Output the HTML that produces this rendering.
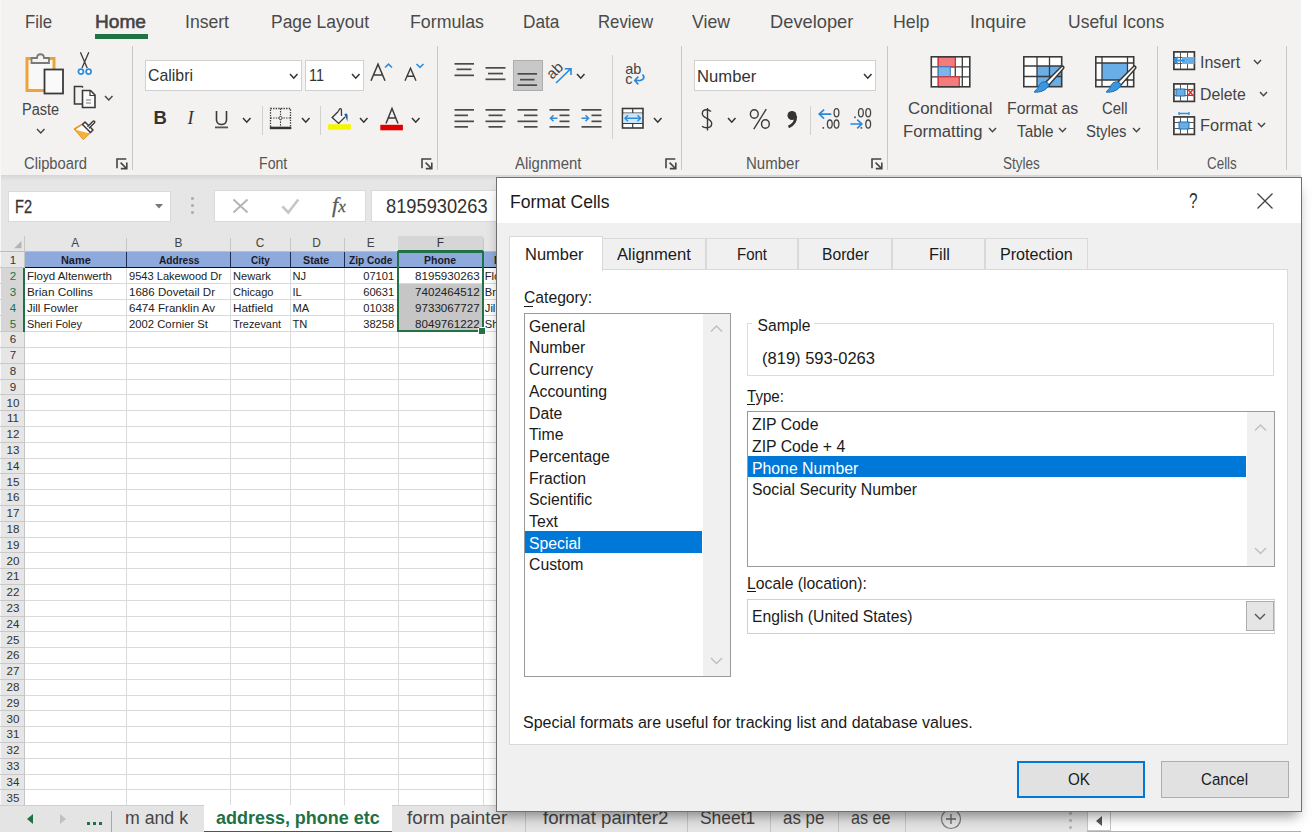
<!DOCTYPE html>
<html><head><meta charset="utf-8"><style>
html,body{margin:0;padding:0;width:1315px;height:834px;overflow:hidden;position:relative;font-family:"Liberation Sans", sans-serif;background:#fff}
svg{display:block}
</style></head><body>
<div style="position:absolute;left:0px;top:0px;width:1301px;height:175px;background:#f3f2f1"></div>
<div style="position:absolute;left:0px;top:175px;width:1301px;height:6px;background:linear-gradient(#d6d6d6,#e6e6e6)"></div>
<div style="position:absolute;left:0px;top:181px;width:1301px;height:71px;background:#e6e6e6"></div>
<div style="position:absolute;left:0px;top:0px;width:1px;height:834px;background:#f7f7f7"></div>
<div id="t0" style="position:absolute;white-space:nowrap;line-height:1;font-size:19.13px;top:11.81px;color:#4a4a4a;font-weight:normal;left:25.00px;transform-origin:0 0;transform:scaleX(0.8767);">File</div>
<div id="t1" style="position:absolute;white-space:nowrap;line-height:1;font-size:19.13px;top:11.81px;color:#444;font-weight:normal;left:95.00px;transform-origin:0 0;-webkit-text-stroke:0.6px #444;">Home</div>
<div id="t2" style="position:absolute;white-space:nowrap;line-height:1;font-size:19.13px;top:11.81px;color:#4a4a4a;font-weight:normal;left:185.00px;transform-origin:0 0;transform:scaleX(0.9206);">Insert</div>
<div id="t3" style="position:absolute;white-space:nowrap;line-height:1;font-size:19.13px;top:11.81px;color:#4a4a4a;font-weight:normal;left:271.00px;transform-origin:0 0;transform:scaleX(0.9131);">Page Layout</div>
<div id="t4" style="position:absolute;white-space:nowrap;line-height:1;font-size:19.13px;top:11.81px;color:#4a4a4a;font-weight:normal;left:409.50px;transform-origin:0 0;transform:scaleX(0.9292);">Formulas</div>
<div id="t5" style="position:absolute;white-space:nowrap;line-height:1;font-size:19.13px;top:11.81px;color:#4a4a4a;font-weight:normal;left:522.60px;transform-origin:0 0;transform:scaleX(0.9015);">Data</div>
<div id="t6" style="position:absolute;white-space:nowrap;line-height:1;font-size:19.13px;top:11.81px;color:#4a4a4a;font-weight:normal;left:598.00px;transform-origin:0 0;transform:scaleX(0.8778);">Review</div>
<div id="t7" style="position:absolute;white-space:nowrap;line-height:1;font-size:19.13px;top:11.81px;color:#4a4a4a;font-weight:normal;left:692.00px;transform-origin:0 0;transform:scaleX(0.9251);">View</div>
<div id="t8" style="position:absolute;white-space:nowrap;line-height:1;font-size:19.13px;top:11.81px;color:#4a4a4a;font-weight:normal;left:769.60px;transform-origin:0 0;transform:scaleX(0.9574);">Developer</div>
<div id="t9" style="position:absolute;white-space:nowrap;line-height:1;font-size:19.13px;top:11.81px;color:#4a4a4a;font-weight:normal;left:892.70px;transform-origin:0 0;transform:scaleX(0.9285);">Help</div>
<div id="t10" style="position:absolute;white-space:nowrap;line-height:1;font-size:19.13px;top:11.81px;color:#4a4a4a;font-weight:normal;left:969.60px;transform-origin:0 0;transform:scaleX(0.9617);">Inquire</div>
<div id="t11" style="position:absolute;white-space:nowrap;line-height:1;font-size:19.13px;top:11.81px;color:#4a4a4a;font-weight:normal;left:1068.40px;transform-origin:0 0;transform:scaleX(0.9158);">Useful Icons</div>
<div style="position:absolute;left:95px;top:34.3px;width:53px;height:4.6px;background:#217346"></div>
<div style="position:absolute;left:132px;top:46px;width:1px;height:124px;background:#c8c8c8"></div>
<div style="position:absolute;left:437px;top:46px;width:1px;height:124px;background:#c8c8c8"></div>
<div style="position:absolute;left:681px;top:46px;width:1px;height:124px;background:#c8c8c8"></div>
<div style="position:absolute;left:887px;top:46px;width:1px;height:124px;background:#c8c8c8"></div>
<div style="position:absolute;left:1157px;top:46px;width:1px;height:124px;background:#c8c8c8"></div>
<div style="position:absolute;left:1286px;top:46px;width:1px;height:124px;background:#c8c8c8"></div>
<div style="position:absolute;left:262px;top:106px;width:1px;height:29px;background:#d0d0d0"></div>
<div style="position:absolute;left:320px;top:106px;width:1px;height:29px;background:#d0d0d0"></div>
<div style="position:absolute;left:612px;top:55px;width:1px;height:84px;background:#d0d0d0"></div>
<div style="position:absolute;left:810px;top:106px;width:1px;height:29px;background:#d0d0d0"></div>
<div id="t12" style="position:absolute;white-space:nowrap;line-height:1;font-size:15.65px;top:156.25px;color:#555;font-weight:normal;left:23.50px;transform-origin:0 0;transform:scaleX(0.9410);">Clipboard</div>
<div id="t13" style="position:absolute;white-space:nowrap;line-height:1;font-size:15.65px;top:156.25px;color:#555;font-weight:normal;left:259.20px;transform-origin:0 0;transform:scaleX(0.9042);">Font</div>
<div id="t14" style="position:absolute;white-space:nowrap;line-height:1;font-size:15.65px;top:156.25px;color:#555;font-weight:normal;left:514.90px;transform-origin:0 0;transform:scaleX(0.9545);">Alignment</div>
<div id="t15" style="position:absolute;white-space:nowrap;line-height:1;font-size:15.65px;top:156.25px;color:#555;font-weight:normal;left:745.50px;transform-origin:0 0;transform:scaleX(0.9597);">Number</div>
<div id="t16" style="position:absolute;white-space:nowrap;line-height:1;font-size:15.65px;top:156.25px;color:#555;font-weight:normal;left:1002.60px;transform-origin:0 0;transform:scaleX(0.8663);">Styles</div>
<div id="t17" style="position:absolute;white-space:nowrap;line-height:1;font-size:15.65px;top:156.25px;color:#555;font-weight:normal;left:1206.50px;transform-origin:0 0;transform:scaleX(0.8572);">Cells</div>
<div style="position:absolute;left:8px;top:191px;width:163px;height:31px;background:#fff;box-shadow:0 0 0 1px #dadada inset"></div>
<div id="t18" style="position:absolute;white-space:nowrap;line-height:1;font-size:18.84px;top:198.05px;color:#333;font-weight:normal;left:15.40px;transform-origin:0 0;transform:scaleX(0.7733);-webkit-text-stroke:0.3px #333;">F2</div>
<svg style="position:absolute;left:154.5px;top:203.5px;overflow:visible;" width="8" height="4.5" viewBox="0 0 8 4.5"><polygon points="0,0 8,0 4,4.5" fill="#777"/></svg>
<div style="position:absolute;left:191px;top:197px;width:2.5px;height:2.5px;background:#b0b0b0;border-radius:50%"></div>
<div style="position:absolute;left:191px;top:204px;width:2.5px;height:2.5px;background:#b0b0b0;border-radius:50%"></div>
<div style="position:absolute;left:191px;top:211px;width:2.5px;height:2.5px;background:#b0b0b0;border-radius:50%"></div>
<div style="position:absolute;left:214px;top:190px;width:152px;height:32px;background:#fff;box-shadow:0 0 0 1px #dadada inset"></div>
<div style="position:absolute;left:371px;top:190px;width:930px;height:32px;background:#fff;box-shadow:0 0 0 1px #dadada inset"></div>
<div id="t19" style="position:absolute;white-space:nowrap;line-height:1;font-size:19.42px;top:196.56px;color:#333;font-weight:normal;left:386.20px;transform-origin:0 0;transform:scaleX(0.9413);">8195930263</div>
<svg style="position:absolute;left:231.5px;top:197.5px;overflow:visible;" width="17" height="16" viewBox="0 0 17 16"><path d="M1.5,1.5 L15.5,14.5 M15.5,1.5 L1.5,14.5" stroke="#b4b4b4" stroke-width="1.9" fill="none"/></svg>
<svg style="position:absolute;left:280px;top:197px;overflow:visible;" width="20" height="17" viewBox="0 0 20 17"><path d="M2.3,9.3 L8.3,15.5 L18.3,2.5" stroke="#c6c6c6" stroke-width="2.6" fill="none"/></svg>
<div style="position:absolute;left:332px;top:194px;font-family:'Liberation Serif',serif;font-style:italic;font-size:22px;color:#5a5a5a;line-height:1;-webkit-text-stroke:0.3px #5a5a5a">f<span style="font-size:17px">x</span></div>
<div style="position:absolute;left:24px;top:251px;width:1277px;height:554px;background:#fff"></div>
<div style="position:absolute;left:1px;top:251px;width:23px;height:554px;background:#e6e6e6"></div>
<div style="position:absolute;left:126px;top:238px;width:1px;height:13px;background:#c6c6c6"></div>
<div style="position:absolute;left:230px;top:238px;width:1px;height:13px;background:#c6c6c6"></div>
<div style="position:absolute;left:290px;top:238px;width:1px;height:13px;background:#c6c6c6"></div>
<div style="position:absolute;left:344px;top:238px;width:1px;height:13px;background:#c6c6c6"></div>
<div style="position:absolute;left:398px;top:238px;width:1px;height:13px;background:#c6c6c6"></div>
<div style="position:absolute;left:483px;top:238px;width:1px;height:13px;background:#c6c6c6"></div>
<div style="position:absolute;left:600px;top:238px;width:1px;height:13px;background:#c6c6c6"></div>
<div style="position:absolute;left:0px;top:251px;width:1301px;height:1px;background:#bdbdbd"></div>
<div style="position:absolute;left:24px;top:236px;width:1px;height:570px;background:#c6c6c6"></div>
<div style="position:absolute;left:398px;top:236px;width:85px;height:15px;background:#d6d6d6"></div>
<div style="position:absolute;left:398px;top:250px;width:85px;height:1.5px;background:#1e7145"></div>
<div style="position:absolute;left:0px;top:267px;width:24px;height:1px;background:#c8c8c8"></div>
<div style="position:absolute;left:0px;top:283px;width:24px;height:1px;background:#c8c8c8"></div>
<div style="position:absolute;left:0px;top:299px;width:24px;height:1px;background:#c8c8c8"></div>
<div style="position:absolute;left:0px;top:315px;width:24px;height:1px;background:#c8c8c8"></div>
<div style="position:absolute;left:0px;top:331px;width:24px;height:1px;background:#c8c8c8"></div>
<div style="position:absolute;left:0px;top:347px;width:24px;height:1px;background:#c8c8c8"></div>
<div style="position:absolute;left:0px;top:363px;width:24px;height:1px;background:#c8c8c8"></div>
<div style="position:absolute;left:0px;top:379px;width:24px;height:1px;background:#c8c8c8"></div>
<div style="position:absolute;left:0px;top:394px;width:24px;height:1px;background:#c8c8c8"></div>
<div style="position:absolute;left:0px;top:410px;width:24px;height:1px;background:#c8c8c8"></div>
<div style="position:absolute;left:0px;top:426px;width:24px;height:1px;background:#c8c8c8"></div>
<div style="position:absolute;left:0px;top:442px;width:24px;height:1px;background:#c8c8c8"></div>
<div style="position:absolute;left:0px;top:458px;width:24px;height:1px;background:#c8c8c8"></div>
<div style="position:absolute;left:0px;top:473px;width:24px;height:1px;background:#c8c8c8"></div>
<div style="position:absolute;left:0px;top:489px;width:24px;height:1px;background:#c8c8c8"></div>
<div style="position:absolute;left:0px;top:505px;width:24px;height:1px;background:#c8c8c8"></div>
<div style="position:absolute;left:0px;top:521px;width:24px;height:1px;background:#c8c8c8"></div>
<div style="position:absolute;left:0px;top:537px;width:24px;height:1px;background:#c8c8c8"></div>
<div style="position:absolute;left:0px;top:552px;width:24px;height:1px;background:#c8c8c8"></div>
<div style="position:absolute;left:0px;top:568px;width:24px;height:1px;background:#c8c8c8"></div>
<div style="position:absolute;left:0px;top:584px;width:24px;height:1px;background:#c8c8c8"></div>
<div style="position:absolute;left:0px;top:600px;width:24px;height:1px;background:#c8c8c8"></div>
<div style="position:absolute;left:0px;top:616px;width:24px;height:1px;background:#c8c8c8"></div>
<div style="position:absolute;left:0px;top:631px;width:24px;height:1px;background:#c8c8c8"></div>
<div style="position:absolute;left:0px;top:647px;width:24px;height:1px;background:#c8c8c8"></div>
<div style="position:absolute;left:0px;top:663px;width:24px;height:1px;background:#c8c8c8"></div>
<div style="position:absolute;left:0px;top:679px;width:24px;height:1px;background:#c8c8c8"></div>
<div style="position:absolute;left:0px;top:695px;width:24px;height:1px;background:#c8c8c8"></div>
<div style="position:absolute;left:0px;top:710px;width:24px;height:1px;background:#c8c8c8"></div>
<div style="position:absolute;left:0px;top:726px;width:24px;height:1px;background:#c8c8c8"></div>
<div style="position:absolute;left:0px;top:742px;width:24px;height:1px;background:#c8c8c8"></div>
<div style="position:absolute;left:0px;top:758px;width:24px;height:1px;background:#c8c8c8"></div>
<div style="position:absolute;left:0px;top:774px;width:24px;height:1px;background:#c8c8c8"></div>
<div style="position:absolute;left:0px;top:789px;width:24px;height:1px;background:#c8c8c8"></div>
<div style="position:absolute;left:0px;top:805px;width:24px;height:1px;background:#c8c8c8"></div>
<div style="position:absolute;left:1px;top:268px;width:23px;height:63px;background:#d6d6d6"></div>
<div style="position:absolute;left:23px;top:268px;width:1.5px;height:64px;background:#1e7145"></div>
<div style="position:absolute;left:25px;top:267px;width:1276px;height:1px;background:#dadada"></div>
<div style="position:absolute;left:25px;top:283px;width:1276px;height:1px;background:#dadada"></div>
<div style="position:absolute;left:25px;top:299px;width:1276px;height:1px;background:#dadada"></div>
<div style="position:absolute;left:25px;top:315px;width:1276px;height:1px;background:#dadada"></div>
<div style="position:absolute;left:25px;top:331px;width:1276px;height:1px;background:#dadada"></div>
<div style="position:absolute;left:25px;top:347px;width:1276px;height:1px;background:#dadada"></div>
<div style="position:absolute;left:25px;top:363px;width:1276px;height:1px;background:#dadada"></div>
<div style="position:absolute;left:25px;top:379px;width:1276px;height:1px;background:#dadada"></div>
<div style="position:absolute;left:25px;top:394px;width:1276px;height:1px;background:#dadada"></div>
<div style="position:absolute;left:25px;top:410px;width:1276px;height:1px;background:#dadada"></div>
<div style="position:absolute;left:25px;top:426px;width:1276px;height:1px;background:#dadada"></div>
<div style="position:absolute;left:25px;top:442px;width:1276px;height:1px;background:#dadada"></div>
<div style="position:absolute;left:25px;top:458px;width:1276px;height:1px;background:#dadada"></div>
<div style="position:absolute;left:25px;top:473px;width:1276px;height:1px;background:#dadada"></div>
<div style="position:absolute;left:25px;top:489px;width:1276px;height:1px;background:#dadada"></div>
<div style="position:absolute;left:25px;top:505px;width:1276px;height:1px;background:#dadada"></div>
<div style="position:absolute;left:25px;top:521px;width:1276px;height:1px;background:#dadada"></div>
<div style="position:absolute;left:25px;top:537px;width:1276px;height:1px;background:#dadada"></div>
<div style="position:absolute;left:25px;top:552px;width:1276px;height:1px;background:#dadada"></div>
<div style="position:absolute;left:25px;top:568px;width:1276px;height:1px;background:#dadada"></div>
<div style="position:absolute;left:25px;top:584px;width:1276px;height:1px;background:#dadada"></div>
<div style="position:absolute;left:25px;top:600px;width:1276px;height:1px;background:#dadada"></div>
<div style="position:absolute;left:25px;top:616px;width:1276px;height:1px;background:#dadada"></div>
<div style="position:absolute;left:25px;top:631px;width:1276px;height:1px;background:#dadada"></div>
<div style="position:absolute;left:25px;top:647px;width:1276px;height:1px;background:#dadada"></div>
<div style="position:absolute;left:25px;top:663px;width:1276px;height:1px;background:#dadada"></div>
<div style="position:absolute;left:25px;top:679px;width:1276px;height:1px;background:#dadada"></div>
<div style="position:absolute;left:25px;top:695px;width:1276px;height:1px;background:#dadada"></div>
<div style="position:absolute;left:25px;top:710px;width:1276px;height:1px;background:#dadada"></div>
<div style="position:absolute;left:25px;top:726px;width:1276px;height:1px;background:#dadada"></div>
<div style="position:absolute;left:25px;top:742px;width:1276px;height:1px;background:#dadada"></div>
<div style="position:absolute;left:25px;top:758px;width:1276px;height:1px;background:#dadada"></div>
<div style="position:absolute;left:25px;top:774px;width:1276px;height:1px;background:#dadada"></div>
<div style="position:absolute;left:25px;top:789px;width:1276px;height:1px;background:#dadada"></div>
<div style="position:absolute;left:25px;top:805px;width:1276px;height:1px;background:#dadada"></div>
<div style="position:absolute;left:126px;top:252px;width:1px;height:553px;background:#dadada"></div>
<div style="position:absolute;left:230px;top:252px;width:1px;height:553px;background:#dadada"></div>
<div style="position:absolute;left:290px;top:252px;width:1px;height:553px;background:#dadada"></div>
<div style="position:absolute;left:344px;top:252px;width:1px;height:553px;background:#dadada"></div>
<div style="position:absolute;left:398px;top:252px;width:1px;height:553px;background:#dadada"></div>
<div style="position:absolute;left:483px;top:252px;width:1px;height:553px;background:#dadada"></div>
<div style="position:absolute;left:600px;top:252px;width:1px;height:553px;background:#dadada"></div>
<div style="position:absolute;left:25px;top:252px;width:472px;height:15px;background:#8ea9db"></div>
<div style="position:absolute;left:126px;top:252px;width:1px;height:15px;background:#1f2d50"></div>
<div style="position:absolute;left:230px;top:252px;width:1px;height:15px;background:#1f2d50"></div>
<div style="position:absolute;left:290px;top:252px;width:1px;height:15px;background:#1f2d50"></div>
<div style="position:absolute;left:344px;top:252px;width:1px;height:15px;background:#1f2d50"></div>
<div style="position:absolute;left:398px;top:252px;width:1px;height:15px;background:#1f2d50"></div>
<div style="position:absolute;left:483px;top:252px;width:1px;height:15px;background:#1f2d50"></div>
<div style="position:absolute;left:25px;top:266.5px;width:472px;height:1.5px;background:#111"></div>
<div style="position:absolute;left:398px;top:284px;width:85px;height:47px;background:#c6c6c6"></div>
<div style="position:absolute;left:397px;top:250.5px;width:87px;height:81.5px;box-shadow:0 0 0 2px #217346 inset"></div>
<div style="position:absolute;left:479px;top:328px;width:6px;height:6px;background:#217346;box-shadow:0 0 0 1px #fff"></div>
<div id="t20" style="position:absolute;white-space:nowrap;line-height:1;font-size:11.88px;top:237.94px;color:#444;font-weight:normal;left:70.10px;transform-origin:0 0;width:10px;text-align:center;">A</div>
<div id="t21" style="position:absolute;white-space:nowrap;line-height:1;font-size:11.88px;top:237.94px;color:#444;font-weight:normal;left:173.35px;transform-origin:0 0;width:10px;text-align:center;">B</div>
<div id="t22" style="position:absolute;white-space:nowrap;line-height:1;font-size:11.88px;top:237.94px;color:#444;font-weight:normal;left:255.10px;transform-origin:0 0;width:10px;text-align:center;">C</div>
<div id="t23" style="position:absolute;white-space:nowrap;line-height:1;font-size:11.88px;top:237.94px;color:#444;font-weight:normal;left:311.65px;transform-origin:0 0;width:10px;text-align:center;">D</div>
<div id="t24" style="position:absolute;white-space:nowrap;line-height:1;font-size:11.88px;top:237.94px;color:#444;font-weight:normal;left:365.60px;transform-origin:0 0;width:10px;text-align:center;">E</div>
<div id="t25" style="position:absolute;white-space:nowrap;line-height:1;font-size:11.88px;top:237.94px;color:#333;font-weight:normal;left:435.30px;transform-origin:0 0;width:10px;text-align:center;">F</div>
<div id="t26" style="position:absolute;white-space:nowrap;line-height:1;font-size:11.88px;top:237.94px;color:#444;font-weight:normal;left:536.50px;transform-origin:0 0;width:10px;text-align:center;">G</div>
<div id="t27" style="position:absolute;white-space:nowrap;line-height:1;font-size:11.59px;top:254.69px;color:#333;font-weight:normal;left:2.00px;transform-origin:0 0;width:22px;text-align:center;">1</div>
<div id="t28" style="position:absolute;white-space:nowrap;line-height:1;font-size:11.59px;top:270.69px;color:#217346;font-weight:normal;left:2.00px;transform-origin:0 0;width:22px;text-align:center;">2</div>
<div id="t29" style="position:absolute;white-space:nowrap;line-height:1;font-size:11.59px;top:286.69px;color:#217346;font-weight:normal;left:2.00px;transform-origin:0 0;width:22px;text-align:center;">3</div>
<div id="t30" style="position:absolute;white-space:nowrap;line-height:1;font-size:11.59px;top:302.69px;color:#217346;font-weight:normal;left:2.00px;transform-origin:0 0;width:22px;text-align:center;">4</div>
<div id="t31" style="position:absolute;white-space:nowrap;line-height:1;font-size:11.59px;top:318.69px;color:#217346;font-weight:normal;left:2.00px;transform-origin:0 0;width:22px;text-align:center;">5</div>
<div id="t32" style="position:absolute;white-space:nowrap;line-height:1;font-size:11.59px;top:334.39px;color:#333;font-weight:normal;left:2.00px;transform-origin:0 0;width:22px;text-align:center;">6</div>
<div id="t33" style="position:absolute;white-space:nowrap;line-height:1;font-size:11.59px;top:350.19px;color:#333;font-weight:normal;left:2.00px;transform-origin:0 0;width:22px;text-align:center;">7</div>
<div id="t34" style="position:absolute;white-space:nowrap;line-height:1;font-size:11.59px;top:365.99px;color:#333;font-weight:normal;left:2.00px;transform-origin:0 0;width:22px;text-align:center;">8</div>
<div id="t35" style="position:absolute;white-space:nowrap;line-height:1;font-size:11.59px;top:381.79px;color:#333;font-weight:normal;left:2.00px;transform-origin:0 0;width:22px;text-align:center;">9</div>
<div id="t36" style="position:absolute;white-space:nowrap;line-height:1;font-size:11.59px;top:397.59px;color:#333;font-weight:normal;left:2.00px;transform-origin:0 0;width:22px;text-align:center;">10</div>
<div id="t37" style="position:absolute;white-space:nowrap;line-height:1;font-size:11.59px;top:413.39px;color:#333;font-weight:normal;left:2.00px;transform-origin:0 0;width:22px;text-align:center;">11</div>
<div id="t38" style="position:absolute;white-space:nowrap;line-height:1;font-size:11.59px;top:429.19px;color:#333;font-weight:normal;left:2.00px;transform-origin:0 0;width:22px;text-align:center;">12</div>
<div id="t39" style="position:absolute;white-space:nowrap;line-height:1;font-size:11.59px;top:444.99px;color:#333;font-weight:normal;left:2.00px;transform-origin:0 0;width:22px;text-align:center;">13</div>
<div id="t40" style="position:absolute;white-space:nowrap;line-height:1;font-size:11.59px;top:460.79px;color:#333;font-weight:normal;left:2.00px;transform-origin:0 0;width:22px;text-align:center;">14</div>
<div id="t41" style="position:absolute;white-space:nowrap;line-height:1;font-size:11.59px;top:476.59px;color:#333;font-weight:normal;left:2.00px;transform-origin:0 0;width:22px;text-align:center;">15</div>
<div id="t42" style="position:absolute;white-space:nowrap;line-height:1;font-size:11.59px;top:492.39px;color:#333;font-weight:normal;left:2.00px;transform-origin:0 0;width:22px;text-align:center;">16</div>
<div id="t43" style="position:absolute;white-space:nowrap;line-height:1;font-size:11.59px;top:508.19px;color:#333;font-weight:normal;left:2.00px;transform-origin:0 0;width:22px;text-align:center;">17</div>
<div id="t44" style="position:absolute;white-space:nowrap;line-height:1;font-size:11.59px;top:523.99px;color:#333;font-weight:normal;left:2.00px;transform-origin:0 0;width:22px;text-align:center;">18</div>
<div id="t45" style="position:absolute;white-space:nowrap;line-height:1;font-size:11.59px;top:539.79px;color:#333;font-weight:normal;left:2.00px;transform-origin:0 0;width:22px;text-align:center;">19</div>
<div id="t46" style="position:absolute;white-space:nowrap;line-height:1;font-size:11.59px;top:555.59px;color:#333;font-weight:normal;left:2.00px;transform-origin:0 0;width:22px;text-align:center;">20</div>
<div id="t47" style="position:absolute;white-space:nowrap;line-height:1;font-size:11.59px;top:571.39px;color:#333;font-weight:normal;left:2.00px;transform-origin:0 0;width:22px;text-align:center;">21</div>
<div id="t48" style="position:absolute;white-space:nowrap;line-height:1;font-size:11.59px;top:587.19px;color:#333;font-weight:normal;left:2.00px;transform-origin:0 0;width:22px;text-align:center;">22</div>
<div id="t49" style="position:absolute;white-space:nowrap;line-height:1;font-size:11.59px;top:602.99px;color:#333;font-weight:normal;left:2.00px;transform-origin:0 0;width:22px;text-align:center;">23</div>
<div id="t50" style="position:absolute;white-space:nowrap;line-height:1;font-size:11.59px;top:618.79px;color:#333;font-weight:normal;left:2.00px;transform-origin:0 0;width:22px;text-align:center;">24</div>
<div id="t51" style="position:absolute;white-space:nowrap;line-height:1;font-size:11.59px;top:634.59px;color:#333;font-weight:normal;left:2.00px;transform-origin:0 0;width:22px;text-align:center;">25</div>
<div id="t52" style="position:absolute;white-space:nowrap;line-height:1;font-size:11.59px;top:650.39px;color:#333;font-weight:normal;left:2.00px;transform-origin:0 0;width:22px;text-align:center;">26</div>
<div id="t53" style="position:absolute;white-space:nowrap;line-height:1;font-size:11.59px;top:666.19px;color:#333;font-weight:normal;left:2.00px;transform-origin:0 0;width:22px;text-align:center;">27</div>
<div id="t54" style="position:absolute;white-space:nowrap;line-height:1;font-size:11.59px;top:681.99px;color:#333;font-weight:normal;left:2.00px;transform-origin:0 0;width:22px;text-align:center;">28</div>
<div id="t55" style="position:absolute;white-space:nowrap;line-height:1;font-size:11.59px;top:697.79px;color:#333;font-weight:normal;left:2.00px;transform-origin:0 0;width:22px;text-align:center;">29</div>
<div id="t56" style="position:absolute;white-space:nowrap;line-height:1;font-size:11.59px;top:713.59px;color:#333;font-weight:normal;left:2.00px;transform-origin:0 0;width:22px;text-align:center;">30</div>
<div id="t57" style="position:absolute;white-space:nowrap;line-height:1;font-size:11.59px;top:729.39px;color:#333;font-weight:normal;left:2.00px;transform-origin:0 0;width:22px;text-align:center;">31</div>
<div id="t58" style="position:absolute;white-space:nowrap;line-height:1;font-size:11.59px;top:745.19px;color:#333;font-weight:normal;left:2.00px;transform-origin:0 0;width:22px;text-align:center;">32</div>
<div id="t59" style="position:absolute;white-space:nowrap;line-height:1;font-size:11.59px;top:760.99px;color:#333;font-weight:normal;left:2.00px;transform-origin:0 0;width:22px;text-align:center;">33</div>
<div id="t60" style="position:absolute;white-space:nowrap;line-height:1;font-size:11.59px;top:776.79px;color:#333;font-weight:normal;left:2.00px;transform-origin:0 0;width:22px;text-align:center;">34</div>
<div id="t61" style="position:absolute;white-space:nowrap;line-height:1;font-size:11.59px;top:792.59px;color:#333;font-weight:normal;left:2.00px;transform-origin:0 0;width:22px;text-align:center;">35</div>
<div id="t62" style="position:absolute;white-space:nowrap;line-height:1;font-size:10.43px;top:256.17px;color:#1a1a2a;font-weight:bold;left:60.60px;transform-origin:0 0;transform:scaleX(1.0461);">Name</div>
<div id="t63" style="position:absolute;white-space:nowrap;line-height:1;font-size:10.43px;top:256.17px;color:#1a1a2a;font-weight:bold;left:158.60px;transform-origin:0 0;transform:scaleX(0.9712);">Address</div>
<div id="t64" style="position:absolute;white-space:nowrap;line-height:1;font-size:10.43px;top:256.17px;color:#1a1a2a;font-weight:bold;left:250.70px;transform-origin:0 0;transform:scaleX(0.9542);">City</div>
<div id="t65" style="position:absolute;white-space:nowrap;line-height:1;font-size:10.43px;top:256.17px;color:#1a1a2a;font-weight:bold;left:303.30px;transform-origin:0 0;transform:scaleX(1.0275);">State</div>
<div id="t66" style="position:absolute;white-space:nowrap;line-height:1;font-size:10.43px;top:256.17px;color:#1a1a2a;font-weight:bold;left:348.80px;transform-origin:0 0;transform:scaleX(0.9713);">Zip Code</div>
<div id="t67" style="position:absolute;white-space:nowrap;line-height:1;font-size:10.43px;top:256.17px;color:#1a1a2a;font-weight:bold;left:424.30px;transform-origin:0 0;transform:scaleX(1.0044);">Phone</div>
<div id="t68" style="position:absolute;white-space:nowrap;line-height:1;font-size:10.43px;top:256.17px;color:#1a1a2a;font-weight:bold;left:494.00px;transform-origin:0 0;">N</div>
<div id="t69" style="position:absolute;white-space:nowrap;line-height:1;font-size:11.16px;top:271.25px;color:#222;font-weight:normal;left:27.30px;transform-origin:0 0;transform:scaleX(1.0305);">Floyd Altenwerth</div>
<div id="t70" style="position:absolute;white-space:nowrap;line-height:1;font-size:11.16px;top:271.25px;color:#222;font-weight:normal;left:128.50px;transform-origin:0 0;transform:scaleX(0.9930);">9543 Lakewood Dr</div>
<div id="t71" style="position:absolute;white-space:nowrap;line-height:1;font-size:11.16px;top:271.25px;color:#222;font-weight:normal;left:232.90px;transform-origin:0 0;transform:scaleX(0.9966);">Newark</div>
<div id="t72" style="position:absolute;white-space:nowrap;line-height:1;font-size:11.16px;top:271.25px;color:#222;font-weight:normal;left:292.40px;transform-origin:0 0;">NJ</div>
<div id="t73" style="position:absolute;white-space:nowrap;line-height:1;font-size:11.16px;top:271.25px;color:#222;font-weight:normal;left:363.20px;transform-origin:0 0;">07101</div>
<div id="t74" style="position:absolute;white-space:nowrap;line-height:1;font-size:11.16px;top:271.25px;color:#222;font-weight:normal;left:415.00px;transform-origin:0 0;transform:scaleX(1.0411);">8195930263</div>
<div id="t75" style="position:absolute;white-space:nowrap;line-height:1;font-size:11.16px;top:271.25px;color:#222;font-weight:normal;left:484.80px;transform-origin:0 0;">Flo</div>
<div id="t76" style="position:absolute;white-space:nowrap;line-height:1;font-size:11.16px;top:287.05px;color:#222;font-weight:normal;left:27.30px;transform-origin:0 0;transform:scaleX(1.0539);">Brian Collins</div>
<div id="t77" style="position:absolute;white-space:nowrap;line-height:1;font-size:11.16px;top:287.05px;color:#222;font-weight:normal;left:128.50px;transform-origin:0 0;transform:scaleX(1.0348);">1686 Dovetail Dr</div>
<div id="t78" style="position:absolute;white-space:nowrap;line-height:1;font-size:11.16px;top:287.05px;color:#222;font-weight:normal;left:232.90px;transform-origin:0 0;transform:scaleX(0.9869);">Chicago</div>
<div id="t79" style="position:absolute;white-space:nowrap;line-height:1;font-size:11.16px;top:287.05px;color:#222;font-weight:normal;left:292.40px;transform-origin:0 0;">IL</div>
<div id="t80" style="position:absolute;white-space:nowrap;line-height:1;font-size:11.16px;top:287.05px;color:#222;font-weight:normal;left:363.20px;transform-origin:0 0;">60631</div>
<div id="t81" style="position:absolute;white-space:nowrap;line-height:1;font-size:11.16px;top:287.05px;color:#222;font-weight:normal;left:415.00px;transform-origin:0 0;transform:scaleX(1.0411);">7402464512</div>
<div id="t82" style="position:absolute;white-space:nowrap;line-height:1;font-size:11.16px;top:287.05px;color:#222;font-weight:normal;left:484.80px;transform-origin:0 0;">Br</div>
<div id="t83" style="position:absolute;white-space:nowrap;line-height:1;font-size:11.16px;top:302.95px;color:#222;font-weight:normal;left:27.30px;transform-origin:0 0;transform:scaleX(1.0284);">Jill Fowler</div>
<div id="t84" style="position:absolute;white-space:nowrap;line-height:1;font-size:11.16px;top:302.95px;color:#222;font-weight:normal;left:128.50px;transform-origin:0 0;transform:scaleX(1.0373);">6474 Franklin Av</div>
<div id="t85" style="position:absolute;white-space:nowrap;line-height:1;font-size:11.16px;top:302.95px;color:#222;font-weight:normal;left:232.90px;transform-origin:0 0;transform:scaleX(1.0574);">Hatfield</div>
<div id="t86" style="position:absolute;white-space:nowrap;line-height:1;font-size:11.16px;top:302.95px;color:#222;font-weight:normal;left:292.40px;transform-origin:0 0;">MA</div>
<div id="t87" style="position:absolute;white-space:nowrap;line-height:1;font-size:11.16px;top:302.95px;color:#222;font-weight:normal;left:363.20px;transform-origin:0 0;">01038</div>
<div id="t88" style="position:absolute;white-space:nowrap;line-height:1;font-size:11.16px;top:302.95px;color:#222;font-weight:normal;left:415.00px;transform-origin:0 0;transform:scaleX(1.0411);">9733067727</div>
<div id="t89" style="position:absolute;white-space:nowrap;line-height:1;font-size:11.16px;top:302.95px;color:#222;font-weight:normal;left:484.80px;transform-origin:0 0;">Jil</div>
<div id="t90" style="position:absolute;white-space:nowrap;line-height:1;font-size:11.16px;top:318.95px;color:#222;font-weight:normal;left:27.30px;transform-origin:0 0;transform:scaleX(0.9745);">Sheri Foley</div>
<div id="t91" style="position:absolute;white-space:nowrap;line-height:1;font-size:11.16px;top:318.95px;color:#222;font-weight:normal;left:128.50px;transform-origin:0 0;transform:scaleX(1.0110);">2002 Cornier St</div>
<div id="t92" style="position:absolute;white-space:nowrap;line-height:1;font-size:11.16px;top:318.95px;color:#222;font-weight:normal;left:232.90px;transform-origin:0 0;transform:scaleX(0.9755);">Trezevant</div>
<div id="t93" style="position:absolute;white-space:nowrap;line-height:1;font-size:11.16px;top:318.95px;color:#222;font-weight:normal;left:292.40px;transform-origin:0 0;">TN</div>
<div id="t94" style="position:absolute;white-space:nowrap;line-height:1;font-size:11.16px;top:318.95px;color:#222;font-weight:normal;left:363.20px;transform-origin:0 0;">38258</div>
<div id="t95" style="position:absolute;white-space:nowrap;line-height:1;font-size:11.16px;top:318.95px;color:#222;font-weight:normal;left:415.00px;transform-origin:0 0;transform:scaleX(1.0411);">8049761222</div>
<div id="t96" style="position:absolute;white-space:nowrap;line-height:1;font-size:11.16px;top:318.95px;color:#222;font-weight:normal;left:484.80px;transform-origin:0 0;">Sh</div>
<svg style="position:absolute;left:14px;top:241px;overflow:visible;" width="7.5" height="7.2" viewBox="0 0 7.5 7.2"><polygon points="7.5,0 7.5,7.2 0,7.2" fill="#b4b4b4"/></svg>
<div style="position:absolute;left:0px;top:805px;width:1301px;height:27px;background:#e4e4e4"></div>
<div style="position:absolute;left:0px;top:805px;width:1301px;height:1px;background:#cfcfcf"></div>
<svg style="position:absolute;left:27px;top:814px;overflow:visible;" width="6" height="10" viewBox="0 0 6 10"><polygon points="6,0 6,10 0,5" fill="#1e7145"/></svg>
<svg style="position:absolute;left:60px;top:814px;overflow:visible;" width="6" height="10" viewBox="0 0 6 10"><polygon points="0,0 0,10 6,5" fill="#c0c0c0"/></svg>
<div style="position:absolute;left:87px;top:822px;width:3px;height:3px;background:#1e7145"></div>
<div style="position:absolute;left:93px;top:822px;width:3px;height:3px;background:#1e7145"></div>
<div style="position:absolute;left:99px;top:822px;width:3px;height:3px;background:#1e7145"></div>
<div style="position:absolute;left:111px;top:811px;width:1px;height:21px;background:#a8a8a8"></div>
<div id="t97" style="position:absolute;white-space:nowrap;line-height:1;font-size:18.84px;top:809.45px;color:#444;font-weight:normal;left:125.00px;transform-origin:0 0;transform:scaleX(0.9405);">m and k</div>
<div style="position:absolute;left:204px;top:805px;width:188px;height:27px;background:#fff"></div>
<div style="position:absolute;left:204px;top:830.5px;width:188px;height:2px;background:#1e7145"></div>
<div id="t98" style="position:absolute;white-space:nowrap;line-height:1;font-size:18.84px;top:809.45px;color:#1e7145;font-weight:bold;left:215.60px;transform-origin:0 0;transform:scaleX(0.9539);">address, phone etc</div>
<div style="position:absolute;left:525px;top:811px;width:1px;height:21px;background:#c4c4c4"></div>
<div style="position:absolute;left:687px;top:811px;width:1px;height:21px;background:#c4c4c4"></div>
<div style="position:absolute;left:770px;top:811px;width:1px;height:21px;background:#c4c4c4"></div>
<div style="position:absolute;left:838px;top:811px;width:1px;height:21px;background:#c4c4c4"></div>
<div style="position:absolute;left:905px;top:811px;width:1px;height:21px;background:#c4c4c4"></div>
<div id="t99" style="position:absolute;white-space:nowrap;line-height:1;font-size:18.84px;top:809.45px;color:#444;font-weight:normal;left:407.00px;transform-origin:0 0;transform:scaleX(0.9973);">form painter</div>
<div id="t100" style="position:absolute;white-space:nowrap;line-height:1;font-size:18.84px;top:809.45px;color:#444;font-weight:normal;left:543.20px;transform-origin:0 0;transform:scaleX(0.9902);">format painter2</div>
<div id="t101" style="position:absolute;white-space:nowrap;line-height:1;font-size:18.84px;top:809.45px;color:#444;font-weight:normal;left:700.20px;transform-origin:0 0;transform:scaleX(0.9248);">Sheet1</div>
<div id="t102" style="position:absolute;white-space:nowrap;line-height:1;font-size:18.84px;top:809.45px;color:#444;font-weight:normal;left:783.00px;transform-origin:0 0;transform:scaleX(0.8988);">as pe</div>
<div id="t103" style="position:absolute;white-space:nowrap;line-height:1;font-size:18.84px;top:809.45px;color:#444;font-weight:normal;left:850.70px;transform-origin:0 0;transform:scaleX(0.8575);">as ee</div>
<svg style="position:absolute;left:940px;top:808px;overflow:visible;" width="22" height="22" viewBox="0 0 22 22"><circle cx="11" cy="11" r="9.5" fill="none" stroke="#777" stroke-width="1.2"/><path d="M11,6 L11,16 M6,11 L16,11" stroke="#666" stroke-width="1.3"/></svg>
<div style="position:absolute;left:1069px;top:812px;width:2.5px;height:2.5px;background:#b5b5b5;border-radius:50%"></div>
<div style="position:absolute;left:1069px;top:819px;width:2.5px;height:2.5px;background:#b5b5b5;border-radius:50%"></div>
<div style="position:absolute;left:1069px;top:826px;width:2.5px;height:2.5px;background:#b5b5b5;border-radius:50%"></div>
<div style="position:absolute;left:1087px;top:810px;width:24px;height:21px;background:#fff;box-shadow:0 0 0 1px #c6c6c6 inset"></div>
<svg style="position:absolute;left:1096px;top:816px;overflow:visible;" width="6" height="10" viewBox="0 0 6 10"><polygon points="6,0 6,10 0,5" fill="#555"/></svg>
<div style="position:absolute;left:1111px;top:810px;width:190px;height:21px;background:#fff"></div>
<div style="position:absolute;left:1087px;top:830.5px;width:214px;height:1.2px;background:#b0b0b0"></div>
<div style="position:absolute;left:0px;top:832px;width:1301px;height:2px;background:#fff"></div>
<div style="position:absolute;left:1301px;top:0px;width:14px;height:834px;background:#fff"></div>
<div style="position:absolute;left:497px;top:178px;width:804px;height:633px;background:#f0f0f0;box-shadow:0 0 0 1px #6f6f6f, 0 8px 12px -3px rgba(0,0,0,0.42)"></div>
<div style="position:absolute;left:497px;top:178px;width:804px;height:45px;background:#fff"></div>
<div id="t104" style="position:absolute;white-space:nowrap;line-height:1;font-size:18.12px;top:193.06px;color:#1a1a1a;font-weight:normal;left:510.00px;transform-origin:0 0;transform:scaleX(0.9694);">Format Cells</div>
<div id="t105" style="position:absolute;white-space:nowrap;line-height:1;font-size:21.74px;top:189.80px;color:#333;font-weight:normal;left:1188.50px;transform-origin:0 0;transform:scaleX(0.7028);">?</div>
<svg style="position:absolute;left:1257px;top:192.5px;overflow:visible;" width="16" height="16" viewBox="0 0 16 16"><path d="M0.5,0.5 L15.5,15.5 M15.5,0.5 L0.5,15.5" stroke="#444" stroke-width="1.3" fill="none"/></svg>
<div style="position:absolute;left:602.3px;top:237.5px;width:103.5px;height:32px;background:#f0f0f0;box-shadow:0 0 0 1px #d9d9d9 inset"></div>
<div style="position:absolute;left:705.8px;top:237.5px;width:92.5px;height:32px;background:#f0f0f0;box-shadow:0 0 0 1px #d9d9d9 inset"></div>
<div style="position:absolute;left:798.3px;top:237.5px;width:93.90000000000009px;height:32px;background:#f0f0f0;box-shadow:0 0 0 1px #d9d9d9 inset"></div>
<div style="position:absolute;left:892.2px;top:237.5px;width:93.0px;height:32px;background:#f0f0f0;box-shadow:0 0 0 1px #d9d9d9 inset"></div>
<div style="position:absolute;left:985.2px;top:237.5px;width:102.5px;height:32px;background:#f0f0f0;box-shadow:0 0 0 1px #d9d9d9 inset"></div>
<div style="position:absolute;left:508.5px;top:269px;width:779px;height:476px;background:#fff;box-shadow:0 0 0 1px #d9d9d9 inset"></div>
<div style="position:absolute;left:508.5px;top:235.5px;width:94px;height:35px;background:#fff;box-shadow:1px 0 0 0 #d9d9d9 inset,-1px 0 0 0 #d9d9d9 inset,0 1px 0 0 #d9d9d9 inset"></div>
<div id="t106" style="position:absolute;white-space:nowrap;line-height:1;font-size:15.65px;top:247.25px;color:#1a1a1a;font-weight:normal;left:525.30px;transform-origin:0 0;transform:scaleX(1.0532);">Number</div>
<div id="t107" style="position:absolute;white-space:nowrap;line-height:1;font-size:15.65px;top:247.25px;color:#1a1a1a;font-weight:normal;left:617.00px;transform-origin:0 0;transform:scaleX(1.0638);">Alignment</div>
<div id="t108" style="position:absolute;white-space:nowrap;line-height:1;font-size:15.65px;top:247.25px;color:#1a1a1a;font-weight:normal;left:737.00px;transform-origin:0 0;transform:scaleX(0.9586);">Font</div>
<div id="t109" style="position:absolute;white-space:nowrap;line-height:1;font-size:15.65px;top:247.25px;color:#1a1a1a;font-weight:normal;left:822.00px;transform-origin:0 0;">Border</div>
<div id="t110" style="position:absolute;white-space:nowrap;line-height:1;font-size:15.65px;top:247.25px;color:#1a1a1a;font-weight:normal;left:929.00px;transform-origin:0 0;transform:scaleX(1.0508);">Fill</div>
<div id="t111" style="position:absolute;white-space:nowrap;line-height:1;font-size:15.65px;top:247.25px;color:#1a1a1a;font-weight:normal;left:1000.40px;transform-origin:0 0;transform:scaleX(1.0309);">Protection</div>
<div id="t112" style="position:absolute;white-space:nowrap;line-height:1;font-size:15.65px;top:290.25px;color:#1a1a1a;font-weight:normal;left:523.70px;transform-origin:0 0;transform:scaleX(1.0028);">Category:</div>
<div style="position:absolute;left:524px;top:305.5px;width:9px;height:1px;background:#1a1a1a"></div>
<div style="position:absolute;left:523.5px;top:312.8px;width:207.5px;height:364.5px;background:#fff;box-shadow:0 0 0 1px #9a9a9a inset"></div>
<div style="position:absolute;left:703px;top:314px;width:27px;height:362px;background:#f0f0f0"></div>
<svg style="position:absolute;left:710.0px;top:324.75px;overflow:visible;" width="13" height="7.5" viewBox="0 0 13 7.5"><polyline points="1,6.5 6.5,1 12,6.5" fill="none" stroke="#c0c0c0" stroke-width="1.5"/></svg>
<svg style="position:absolute;left:710.0px;top:657.25px;overflow:visible;" width="13" height="7.5" viewBox="0 0 13 7.5"><polyline points="1,1 6.5,6.5 12,1" fill="none" stroke="#c0c0c0" stroke-width="1.5"/></svg>
<div style="position:absolute;left:525.2px;top:531.3px;width:177px;height:21.6px;background:#0078d7"></div>
<div id="t113" style="position:absolute;white-space:nowrap;line-height:1;font-size:15.80px;top:318.73px;color:#1a1a1a;font-weight:normal;left:529.00px;transform-origin:0 0;">General</div>
<div id="t114" style="position:absolute;white-space:nowrap;line-height:1;font-size:15.80px;top:340.43px;color:#1a1a1a;font-weight:normal;left:529.00px;transform-origin:0 0;">Number</div>
<div id="t115" style="position:absolute;white-space:nowrap;line-height:1;font-size:15.80px;top:362.13px;color:#1a1a1a;font-weight:normal;left:529.00px;transform-origin:0 0;">Currency</div>
<div id="t116" style="position:absolute;white-space:nowrap;line-height:1;font-size:15.80px;top:383.83px;color:#1a1a1a;font-weight:normal;left:529.00px;transform-origin:0 0;">Accounting</div>
<div id="t117" style="position:absolute;white-space:nowrap;line-height:1;font-size:15.80px;top:405.53px;color:#1a1a1a;font-weight:normal;left:529.00px;transform-origin:0 0;">Date</div>
<div id="t118" style="position:absolute;white-space:nowrap;line-height:1;font-size:15.80px;top:427.23px;color:#1a1a1a;font-weight:normal;left:529.00px;transform-origin:0 0;">Time</div>
<div id="t119" style="position:absolute;white-space:nowrap;line-height:1;font-size:15.80px;top:448.93px;color:#1a1a1a;font-weight:normal;left:529.00px;transform-origin:0 0;">Percentage</div>
<div id="t120" style="position:absolute;white-space:nowrap;line-height:1;font-size:15.80px;top:470.63px;color:#1a1a1a;font-weight:normal;left:529.00px;transform-origin:0 0;">Fraction</div>
<div id="t121" style="position:absolute;white-space:nowrap;line-height:1;font-size:15.80px;top:492.33px;color:#1a1a1a;font-weight:normal;left:529.00px;transform-origin:0 0;">Scientific</div>
<div id="t122" style="position:absolute;white-space:nowrap;line-height:1;font-size:15.80px;top:514.03px;color:#1a1a1a;font-weight:normal;left:529.00px;transform-origin:0 0;">Text</div>
<div id="t123" style="position:absolute;white-space:nowrap;line-height:1;font-size:15.80px;top:535.73px;color:#fff;font-weight:normal;left:529.00px;transform-origin:0 0;">Special</div>
<div id="t124" style="position:absolute;white-space:nowrap;line-height:1;font-size:15.80px;top:557.43px;color:#1a1a1a;font-weight:normal;left:529.00px;transform-origin:0 0;">Custom</div>
<div style="position:absolute;left:747px;top:323px;width:527px;height:53px;box-shadow:0 0 0 1px #dcdcdc inset"></div>
<div style="position:absolute;left:752px;top:316px;width:62px;height:12px;background:#fff"></div>
<div id="t125" style="position:absolute;white-space:nowrap;line-height:1;font-size:15.65px;top:318.25px;color:#1a1a1a;font-weight:normal;left:757.50px;transform-origin:0 0;">Sample</div>
<div id="t126" style="position:absolute;white-space:nowrap;line-height:1;font-size:15.80px;top:350.63px;color:#1a1a1a;font-weight:normal;left:762.20px;transform-origin:0 0;transform:scaleX(1.0460);">(819) 593-0263</div>
<div id="t127" style="position:absolute;white-space:nowrap;line-height:1;font-size:15.65px;top:388.75px;color:#1a1a1a;font-weight:normal;left:747.00px;transform-origin:0 0;transform:scaleX(0.9669);">Type:</div>
<div style="position:absolute;left:747px;top:404px;width:8px;height:1px;background:#1a1a1a"></div>
<div style="position:absolute;left:747px;top:410.8px;width:528px;height:156px;background:#fff;box-shadow:0 0 0 1px #9a9a9a inset"></div>
<div style="position:absolute;left:1247px;top:412px;width:27px;height:154px;background:#f0f0f0"></div>
<svg style="position:absolute;left:1254.0px;top:423.75px;overflow:visible;" width="13" height="7.5" viewBox="0 0 13 7.5"><polyline points="1,6.5 6.5,1 12,6.5" fill="none" stroke="#c0c0c0" stroke-width="1.5"/></svg>
<svg style="position:absolute;left:1254.0px;top:547.25px;overflow:visible;" width="13" height="7.5" viewBox="0 0 13 7.5"><polyline points="1,1 6.5,6.5 12,1" fill="none" stroke="#c0c0c0" stroke-width="1.5"/></svg>
<div style="position:absolute;left:748px;top:455.8px;width:498px;height:21.6px;background:#0078d7"></div>
<div id="t128" style="position:absolute;white-space:nowrap;line-height:1;font-size:15.80px;top:417.23px;color:#1a1a1a;font-weight:normal;left:752.00px;transform-origin:0 0;">ZIP Code</div>
<div id="t129" style="position:absolute;white-space:nowrap;line-height:1;font-size:15.80px;top:438.93px;color:#1a1a1a;font-weight:normal;left:752.00px;transform-origin:0 0;">ZIP Code + 4</div>
<div id="t130" style="position:absolute;white-space:nowrap;line-height:1;font-size:15.80px;top:460.63px;color:#fff;font-weight:normal;left:752.00px;transform-origin:0 0;">Phone Number</div>
<div id="t131" style="position:absolute;white-space:nowrap;line-height:1;font-size:15.80px;top:482.33px;color:#1a1a1a;font-weight:normal;left:752.00px;transform-origin:0 0;">Social Security Number</div>
<div id="t132" style="position:absolute;white-space:nowrap;line-height:1;font-size:15.65px;top:575.55px;color:#1a1a1a;font-weight:normal;left:747.00px;transform-origin:0 0;transform:scaleX(1.0075);">Locale (location):</div>
<div style="position:absolute;left:747px;top:591px;width:9px;height:1px;background:#1a1a1a"></div>
<div style="position:absolute;left:747px;top:599px;width:528px;height:35px;background:#fff;box-shadow:0 0 0 1px #cfcfcf inset"></div>
<div style="position:absolute;left:1245.5px;top:601px;width:28px;height:30px;background:#e5e5e5;box-shadow:0 0 0 1px #adadad inset"></div>
<svg style="position:absolute;left:1253.5px;top:612.5px;overflow:visible;" width="12" height="7" viewBox="0 0 12 7"><polyline points="1,1 6.0,6 11,1" fill="none" stroke="#555" stroke-width="1.4"/></svg>
<div id="t133" style="position:absolute;white-space:nowrap;line-height:1;font-size:15.80px;top:608.63px;color:#1a1a1a;font-weight:normal;left:752.00px;transform-origin:0 0;transform:scaleX(0.9934);">English (United States)</div>
<div id="t134" style="position:absolute;white-space:nowrap;line-height:1;font-size:15.65px;top:715.05px;color:#1a1a1a;font-weight:normal;left:523.20px;transform-origin:0 0;transform:scaleX(1.0245);">Special formats are useful for tracking list and database values.</div>
<div style="position:absolute;left:1016.5px;top:760.5px;width:128px;height:37px;background:#e1e1e1;box-shadow:0 0 0 2px #0078d7 inset"></div>
<div id="t135" style="position:absolute;white-space:nowrap;line-height:1;font-size:15.65px;top:772.25px;color:#1a1a1a;font-weight:normal;left:1068.00px;transform-origin:0 0;transform:scaleX(0.9730);">OK</div>
<div style="position:absolute;left:1161.2px;top:760.5px;width:128px;height:37px;background:#e1e1e1;box-shadow:0 0 0 1px #adadad inset"></div>
<div id="t136" style="position:absolute;white-space:nowrap;line-height:1;font-size:15.65px;top:772.25px;color:#1a1a1a;font-weight:normal;left:1201.00px;transform-origin:0 0;transform:scaleX(0.9653);">Cancel</div>
<svg style="position:absolute;left:25px;top:51px;overflow:visible;" width="40" height="44" viewBox="0 0 40 44">
<rect x="2" y="7.5" width="27" height="32" fill="#fff7ea" stroke="#eba340" stroke-width="3"/>
<rect x="4.5" y="10" width="22" height="27" fill="#f8f8f8"/>
<path d="M6.5,12 L6.5,7 L12,7 C12,2 19,2 19,7 L24,7 L24,12 Z" fill="#f3f3f3" stroke="#7a7a7a" stroke-width="1.8"/>
<rect x="19.5" y="18.5" width="18.5" height="24" fill="#fafafa" stroke="#3a3a3a" stroke-width="1.8"/>
</svg>
<div id="t137" style="position:absolute;white-space:nowrap;line-height:1;font-size:15.80px;top:101.73px;color:#444;font-weight:normal;left:22.40px;transform-origin:0 0;transform:scaleX(0.9206);">Paste</div>
<svg style="position:absolute;left:35.55px;top:127.69999999999999px;overflow:visible;" width="9.5" height="6" viewBox="0 0 9.5 6"><polyline points="1,1 4.75,5 8.5,1" fill="none" stroke="#444" stroke-width="1.4"/></svg>
<svg style="position:absolute;left:76px;top:51px;overflow:visible;" width="18" height="24" viewBox="0 0 18 24">
<path d="M4.4,1.2 L11.2,17 M12.8,1.2 L6,17" stroke="#3a3a3a" stroke-width="1.3" fill="none"/>
<circle cx="4.9" cy="20.6" r="2.5" fill="#fff" stroke="#2f8fdd" stroke-width="1.8"/>
<circle cx="12.6" cy="20.6" r="2.5" fill="#fff" stroke="#2f8fdd" stroke-width="1.8"/>
</svg>
<svg style="position:absolute;left:73px;top:85px;overflow:visible;" width="24" height="24" viewBox="0 0 24 24">
<path d="M10,19 L1.5,19 L1.5,1.5 L9,1.5 L10,2.5" fill="none" stroke="#3a3a3a" stroke-width="1.6"/>
<path d="M9.5,5.5 L17.5,5.5 L22,10 L22,22.5 L9.5,22.5 Z" fill="#fafafa" stroke="#3a3a3a" stroke-width="1.6"/>
<path d="M17,5.5 L17,10.5 L22,10.5" fill="none" stroke="#3a3a3a" stroke-width="1.2"/>
<path d="M13,15 L18,15 M13,18 L18,18" stroke="#777" stroke-width="1.1"/>
</svg>
<svg style="position:absolute;left:104.45px;top:95.4px;overflow:visible;" width="9.5" height="6" viewBox="0 0 9.5 6"><polyline points="1,1 4.75,5 8.5,1" fill="none" stroke="#444" stroke-width="1.4"/></svg>
<svg style="position:absolute;left:116px;top:158px;overflow:visible;" width="12" height="12" viewBox="0 0 12 12"><path d="M1,10.3 L1,1 L10.3,1 M4.6,4.6 L10.3,10.3 M4.8,10.6 L10.8,10.6 L10.8,4.6" fill="none" stroke="#444" stroke-width="1.6"/></svg>
<div style="position:absolute;left:144.5px;top:59.5px;width:157px;height:31px;background:#fff;box-shadow:0 0 0 1px #d0d0d0 inset"></div>
<div id="t138" style="position:absolute;white-space:nowrap;line-height:1;font-size:16.81px;top:67.77px;color:#333;font-weight:normal;left:147.70px;transform-origin:0 0;transform:scaleX(0.9452);">Calibri</div>
<svg style="position:absolute;left:289.25px;top:72.60000000000001px;overflow:visible;" width="9.5" height="6.2" viewBox="0 0 9.5 6.2"><polyline points="1,1 4.75,5.2 8.5,1" fill="none" stroke="#333" stroke-width="1.5"/></svg>
<div style="position:absolute;left:304.5px;top:59.5px;width:59px;height:31px;background:#fff;box-shadow:0 0 0 1px #d0d0d0 inset"></div>
<div id="t139" style="position:absolute;white-space:nowrap;line-height:1;font-size:16.81px;top:67.77px;color:#333;font-weight:normal;left:308.50px;transform-origin:0 0;transform:scaleX(0.8602);">11</div>
<svg style="position:absolute;left:350.75px;top:72.60000000000001px;overflow:visible;" width="9.5" height="6.2" viewBox="0 0 9.5 6.2"><polyline points="1,1 4.75,5.2 8.5,1" fill="none" stroke="#333" stroke-width="1.5"/></svg>
<svg style="position:absolute;left:370px;top:62px;overflow:visible;" width="24" height="20" viewBox="0 0 24 20"><path d="M1,18.7 L8,2.2 L15,18.7 M3.6,13 L12.4,13" fill="none" stroke="#3a3a3a" stroke-width="1.5"/><path d="M15,5.5 L18.5,2.2 L22,5.5" fill="none" stroke="#2f8fdd" stroke-width="1.7"/></svg>
<svg style="position:absolute;left:404px;top:62px;overflow:visible;" width="20" height="20" viewBox="0 0 20 20"><path d="M1,18.7 L6.5,6.3 L12,18.7 M2.9,14.3 L10.1,14.3" fill="none" stroke="#3a3a3a" stroke-width="1.4"/><path d="M12.5,2 L16,5.3 L19.5,2" fill="none" stroke="#2f8fdd" stroke-width="1.7"/></svg>
<div style="position:absolute;left:153.5px;top:109px;font-size:18.5px;font-weight:bold;color:#333;line-height:1">B</div>
<div style="position:absolute;left:187.5px;top:109px;font-size:18.5px;font-style:italic;font-family:'Liberation Serif',serif;color:#333;line-height:1">I</div>
<svg style="position:absolute;left:214px;top:110px;overflow:visible;" width="15" height="19" viewBox="0 0 15 19"><path d="M2.5,1 L2.5,10 C2.5,16 12.5,16 12.5,10 L12.5,1" fill="none" stroke="#3a3a3a" stroke-width="1.6"/><rect x="1" y="16.5" width="13" height="1.8" fill="#555"/></svg>
<svg style="position:absolute;left:241.95px;top:117.10000000000001px;overflow:visible;" width="9.5" height="6.2" viewBox="0 0 9.5 6.2"><polyline points="1,1 4.75,5.2 8.5,1" fill="none" stroke="#333" stroke-width="1.5"/></svg>
<svg style="position:absolute;left:269px;top:107px;overflow:visible;" width="23" height="23" viewBox="0 0 23 23"><rect x="1.5" y="1.5" width="20" height="19" fill="none" stroke="#3a3a3a" stroke-width="1.3" stroke-dasharray="1.4,1.2"/><path d="M11.5,1.5 L11.5,20 M1.5,11 L21.5,11" stroke="#3a3a3a" stroke-width="1.1" stroke-dasharray="1.4,1.2"/><circle cx="11.5" cy="11" r="1.6" fill="#fff" stroke="#3a3a3a" stroke-width="0.9"/><rect x="0.8" y="19.8" width="21.5" height="2.4" fill="#333"/></svg>
<svg style="position:absolute;left:300.95px;top:117.10000000000001px;overflow:visible;" width="9.5" height="6.2" viewBox="0 0 9.5 6.2"><polyline points="1,1 4.75,5.2 8.5,1" fill="none" stroke="#333" stroke-width="1.5"/></svg>
<svg style="position:absolute;left:359.25px;top:117.10000000000001px;overflow:visible;" width="9.5" height="6.2" viewBox="0 0 9.5 6.2"><polyline points="1,1 4.75,5.2 8.5,1" fill="none" stroke="#333" stroke-width="1.5"/></svg>
<svg style="position:absolute;left:380px;top:107px;overflow:visible;" width="24" height="25" viewBox="0 0 24 25"><path d="M6,16.5 L12,1.5 L18,16.5 M8.2,11 L15.8,11" fill="none" stroke="#3a3a3a" stroke-width="1.5"/><rect x="0.3" y="17.8" width="22.6" height="5.5" fill="#e00000"/></svg>
<svg style="position:absolute;left:411.45px;top:117.10000000000001px;overflow:visible;" width="9.5" height="6.2" viewBox="0 0 9.5 6.2"><polyline points="1,1 4.75,5.2 8.5,1" fill="none" stroke="#333" stroke-width="1.5"/></svg>
<svg style="position:absolute;left:421px;top:158px;overflow:visible;" width="12" height="12" viewBox="0 0 12 12"><path d="M1,10.3 L1,1 L10.3,1 M4.6,4.6 L10.3,10.3 M4.8,10.6 L10.8,10.6 L10.8,4.6" fill="none" stroke="#444" stroke-width="1.6"/></svg>
<svg style="position:absolute;left:454px;top:62px;overflow:visible;" width="24" height="24" viewBox="0 0 24 24"><rect x="0.5" y="1" width="19.5" height="1.7" fill="#4a4a4a"/><rect x="2.5" y="6.5" width="15.0" height="1.7" fill="#4a4a4a"/><rect x="0.5" y="12.5" width="19.5" height="1.7" fill="#4a4a4a"/></svg>
<div style="position:absolute;left:512.5px;top:60px;width:30px;height:31px;background:#c8c8c8;box-shadow:0 0 0 1px #adadad inset"></div>
<svg style="position:absolute;left:485px;top:66px;overflow:visible;" width="24" height="24" viewBox="0 0 24 24"><rect x="0.5" y="1" width="20.0" height="1.7" fill="#4a4a4a"/><rect x="3" y="6.7" width="15" height="1.7" fill="#4a4a4a"/><rect x="0.5" y="12.5" width="20.0" height="1.7" fill="#4a4a4a"/></svg>
<svg style="position:absolute;left:517px;top:72px;overflow:visible;" width="24" height="24" viewBox="0 0 24 24"><rect x="0.5" y="1" width="19.5" height="1.7" fill="#4a4a4a"/><rect x="3" y="6.8" width="14.5" height="1.7" fill="#4a4a4a"/><rect x="0.5" y="12.3" width="19.5" height="1.7" fill="#4a4a4a"/></svg>
<svg style="position:absolute;left:575.95px;top:72.7px;overflow:visible;" width="9.5" height="6.2" viewBox="0 0 9.5 6.2"><polyline points="1,1 4.75,5.2 8.5,1" fill="none" stroke="#333" stroke-width="1.5"/></svg>
<svg style="position:absolute;left:454px;top:108px;overflow:visible;" width="24" height="24" viewBox="0 0 24 24"><rect x="0.5" y="1" width="19.5" height="1.7" fill="#4a4a4a"/><rect x="0.5" y="6.5" width="13.5" height="1.7" fill="#4a4a4a"/><rect x="0.5" y="12.5" width="19.5" height="1.7" fill="#4a4a4a"/><rect x="0.5" y="18" width="13.5" height="1.7" fill="#4a4a4a"/></svg>
<svg style="position:absolute;left:485px;top:108px;overflow:visible;" width="24" height="24" viewBox="0 0 24 24"><rect x="0.5" y="1" width="20.0" height="1.7" fill="#4a4a4a"/><rect x="3.5" y="6.5" width="14.0" height="1.7" fill="#4a4a4a"/><rect x="0.5" y="12.5" width="20.0" height="1.7" fill="#4a4a4a"/><rect x="3.5" y="18" width="14.0" height="1.7" fill="#4a4a4a"/></svg>
<svg style="position:absolute;left:517px;top:108px;overflow:visible;" width="24" height="24" viewBox="0 0 24 24"><rect x="0.5" y="1" width="20.0" height="1.7" fill="#4a4a4a"/><rect x="7" y="6.5" width="13.5" height="1.7" fill="#4a4a4a"/><rect x="0.5" y="12.5" width="20.0" height="1.7" fill="#4a4a4a"/><rect x="7" y="18" width="13.5" height="1.7" fill="#4a4a4a"/></svg>
<svg style="position:absolute;left:549px;top:108px;overflow:visible;" width="24" height="24" viewBox="0 0 24 24"><rect x="0.5" y="1" width="20" height="1.7" fill="#4a4a4a"/><rect x="10.5" y="6.5" width="10" height="1.7" fill="#4a4a4a"/><rect x="10.5" y="12.5" width="10" height="1.7" fill="#4a4a4a"/><rect x="0.5" y="18" width="20" height="1.7" fill="#4a4a4a"/><path d="M8.5,10.3 L1.5,10.3 M4.5,7.3 L1.5,10.3 L4.5,13.3" fill="none" stroke="#2f8fdd" stroke-width="1.6"/></svg>
<svg style="position:absolute;left:581px;top:108px;overflow:visible;" width="24" height="24" viewBox="0 0 24 24"><rect x="0.5" y="1" width="20" height="1.7" fill="#4a4a4a"/><rect x="10.5" y="6.5" width="10" height="1.7" fill="#4a4a4a"/><rect x="10.5" y="12.5" width="10" height="1.7" fill="#4a4a4a"/><rect x="0.5" y="18" width="20" height="1.7" fill="#4a4a4a"/><path d="M0.5,10.3 L7.5,10.3 M4.5,7.3 L7.5,10.3 L4.5,13.3" fill="none" stroke="#2f8fdd" stroke-width="1.6"/></svg>
<svg style="position:absolute;left:621px;top:107px;overflow:visible;" width="24" height="24" viewBox="0 0 24 24"><rect x="1.5" y="1.5" width="20.5" height="19.5" fill="#fff" stroke="#3a3a3a" stroke-width="1.6"/><path d="M1.5,6 L22,6 M1.5,16.5 L22,16.5 M11.7,1.5 L11.7,6 M11.7,16.5 L11.7,21" stroke="#3a3a3a" stroke-width="1.2"/><rect x="2.5" y="6.5" width="18.5" height="9.5" fill="#cfe5f8"/><path d="M4,11.3 L19.5,11.3 M7,8.3 L4,11.3 L7,14.3 M16.5,8.3 L19.5,11.3 L16.5,14.3" fill="none" stroke="#2f8fdd" stroke-width="1.5"/></svg>
<svg style="position:absolute;left:653.15px;top:117.4px;overflow:visible;" width="9.5" height="6.2" viewBox="0 0 9.5 6.2"><polyline points="1,1 4.75,5.2 8.5,1" fill="none" stroke="#333" stroke-width="1.5"/></svg>
<svg style="position:absolute;left:665px;top:158px;overflow:visible;" width="12" height="12" viewBox="0 0 12 12"><path d="M1,10.3 L1,1 L10.3,1 M4.6,4.6 L10.3,10.3 M4.8,10.6 L10.8,10.6 L10.8,4.6" fill="none" stroke="#444" stroke-width="1.6"/></svg>
<div style="position:absolute;left:693.5px;top:59.5px;width:182px;height:31.5px;background:#fff;box-shadow:0 0 0 1px #d0d0d0 inset"></div>
<div id="t140" style="position:absolute;white-space:nowrap;line-height:1;font-size:16.23px;top:68.26px;color:#333;font-weight:normal;left:696.70px;transform-origin:0 0;transform:scaleX(1.0262);">Number</div>
<svg style="position:absolute;left:863.05px;top:72.9px;overflow:visible;" width="9.5" height="6.2" viewBox="0 0 9.5 6.2"><polyline points="1,1 4.75,5.2 8.5,1" fill="none" stroke="#333" stroke-width="1.5"/></svg>
<svg style="position:absolute;left:727.25px;top:117.30000000000001px;overflow:visible;" width="9.5" height="6.2" viewBox="0 0 9.5 6.2"><polyline points="1,1 4.75,5.2 8.5,1" fill="none" stroke="#333" stroke-width="1.5"/></svg>
<svg style="position:absolute;left:786px;top:110px;overflow:visible;" width="12" height="18" viewBox="0 0 12 18"><circle cx="6" cy="5.5" r="4.5" fill="#333"/><path d="M9.8,6 C10,11 7,15 2.5,17" fill="none" stroke="#333" stroke-width="2.6"/></svg>
<svg style="position:absolute;left:871px;top:158px;overflow:visible;" width="12" height="12" viewBox="0 0 12 12"><path d="M1,10.3 L1,1 L10.3,1 M4.6,4.6 L10.3,10.3 M4.8,10.6 L10.8,10.6 L10.8,4.6" fill="none" stroke="#444" stroke-width="1.6"/></svg>
<div id="t141" style="position:absolute;white-space:nowrap;line-height:1;font-size:16.23px;top:100.46px;color:#444;font-weight:normal;left:907.90px;transform-origin:0 0;transform:scaleX(1.0400);">Conditional</div>
<div id="t142" style="position:absolute;white-space:nowrap;line-height:1;font-size:16.23px;top:122.56px;color:#444;font-weight:normal;left:902.50px;transform-origin:0 0;transform:scaleX(1.0256);">Formatting</div>
<svg style="position:absolute;left:988.0px;top:127.1px;overflow:visible;" width="9" height="5.8" viewBox="0 0 9 5.8"><polyline points="1,1 4.5,4.8 8,1" fill="none" stroke="#444" stroke-width="1.4"/></svg>
<svg style="position:absolute;left:1022.5px;top:56px;overflow:visible;" width="45" height="40" viewBox="0 0 45 40"><rect x="0.8" y="0.8" width="37.9" height="29.9" fill="#fff"/><rect x="14" y="10" width="25" height="21" fill="#6aaee8"/><path d="M14,0.8 L14,30.7" stroke="#3a3a3a" stroke-width="1.3"/><path d="M26.5,0.8 L26.5,30.7" stroke="#3a3a3a" stroke-width="1.3"/><path d="M0.8,10 L38.7,10" stroke="#3a3a3a" stroke-width="1.3"/><path d="M0.8,20.5 L38.7,20.5" stroke="#3a3a3a" stroke-width="1.3"/><rect x="0.8" y="0.8" width="37.9" height="29.9" fill="none" stroke="#3a3a3a" stroke-width="1.6"/><path d="M38,11 C40,9 42,11 40,13 L26,29 L23,26 Z" fill="#fff" stroke="#3a3a3a" stroke-width="1.5"/><path d="M23,26 C19,25 16,28 15.5,31 C14,33 12,35 11,36 C17,37 24,34 26,29 Z" fill="#3a96dd" stroke="#1f6fb5" stroke-width="1"/></svg>
<div id="t143" style="position:absolute;white-space:nowrap;line-height:1;font-size:16.23px;top:100.46px;color:#444;font-weight:normal;left:1006.70px;transform-origin:0 0;transform:scaleX(0.9751);">Format as</div>
<div id="t144" style="position:absolute;white-space:nowrap;line-height:1;font-size:16.23px;top:122.56px;color:#444;font-weight:normal;left:1016.60px;transform-origin:0 0;transform:scaleX(0.9438);">Table</div>
<svg style="position:absolute;left:1058.0px;top:127.1px;overflow:visible;" width="9" height="5.8" viewBox="0 0 9 5.8"><polyline points="1,1 4.5,4.8 8,1" fill="none" stroke="#444" stroke-width="1.4"/></svg>
<svg style="position:absolute;left:1094.5px;top:56px;overflow:visible;" width="45" height="40" viewBox="0 0 45 40"><rect x="0.8" y="0.8" width="37.9" height="29.9" fill="#fff"/><rect x="7" y="7" width="25.5" height="17" fill="#6aaee8"/><path d="M7,0.8 L7,30.7" stroke="#3a3a3a" stroke-width="1.3"/><path d="M32.5,0.8 L32.5,30.7" stroke="#3a3a3a" stroke-width="1.3"/><path d="M0.8,7 L38.7,7" stroke="#3a3a3a" stroke-width="1.3"/><path d="M0.8,24 L38.7,24" stroke="#3a3a3a" stroke-width="1.3"/><rect x="0.8" y="0.8" width="37.9" height="29.9" fill="none" stroke="#3a3a3a" stroke-width="1.6"/><path d="M38,11 C40,9 42,11 40,13 L26,29 L23,26 Z" fill="#fff" stroke="#3a3a3a" stroke-width="1.5"/><path d="M23,26 C19,25 16,28 15.5,31 C14,33 12,35 11,36 C17,37 24,34 26,29 Z" fill="#3a96dd" stroke="#1f6fb5" stroke-width="1"/></svg>
<div id="t145" style="position:absolute;white-space:nowrap;line-height:1;font-size:16.23px;top:100.46px;color:#444;font-weight:normal;left:1101.60px;transform-origin:0 0;transform:scaleX(0.9194);">Cell</div>
<div id="t146" style="position:absolute;white-space:nowrap;line-height:1;font-size:16.23px;top:122.56px;color:#444;font-weight:normal;left:1085.80px;transform-origin:0 0;transform:scaleX(0.9169);">Styles</div>
<svg style="position:absolute;left:1131.7px;top:127.1px;overflow:visible;" width="9" height="5.8" viewBox="0 0 9 5.8"><polyline points="1,1 4.5,4.8 8,1" fill="none" stroke="#444" stroke-width="1.4"/></svg>
<svg style="position:absolute;left:1173px;top:51px;overflow:visible;" width="23" height="20" viewBox="0 0 23 20"><rect x="0.9" y="0.9" width="20.5" height="17.5" fill="#fff" stroke="#3a3a3a" stroke-width="1.7"/><path d="M7.5,1 L7.5,18.5 M14.5,1 L14.5,18.5 M1,6.5 L21.5,6.5 M1,12.5 L21.5,12.5" stroke="#555" stroke-width="1"/><rect x="9" y="6" width="12.5" height="7" fill="#6aaee8"/><path d="M11.5,9.5 L1.5,9.5 M5,6 L1.5,9.5 L5,13" fill="none" stroke="#2f8fdd" stroke-width="1.8"/></svg>
<svg style="position:absolute;left:1173px;top:83px;overflow:visible;" width="23" height="20" viewBox="0 0 23 20"><rect x="0.9" y="0.9" width="20.5" height="17.5" fill="#fff" stroke="#3a3a3a" stroke-width="1.7"/><path d="M7.5,1 L7.5,18.5 M14.5,1 L14.5,18.5 M1,6.5 L21.5,6.5 M1,12.5 L21.5,12.5" stroke="#555" stroke-width="1"/><rect x="3" y="6" width="9" height="7" fill="#6aaee8" stroke="#1f6fb5" stroke-width="1"/><path d="M14.5,6 L20.5,13 M20.5,6 L14.5,13" stroke="#e03030" stroke-width="1.6"/></svg>
<svg style="position:absolute;left:1173px;top:112px;overflow:visible;" width="23" height="24" viewBox="0 0 23 24"><rect x="0.9" y="4.9" width="20.5" height="17.5" fill="#fff" stroke="#3a3a3a" stroke-width="1.7"/><path d="M7.5,5 L7.5,22.5 M14.5,5 L14.5,22.5 M1,10.5 L21.5,10.5 M1,16.5 L21.5,16.5" stroke="#555" stroke-width="1"/><rect x="6" y="10" width="10" height="7" fill="#6aaee8" stroke="#1f6fb5" stroke-width="1"/><path d="M6,1.5 L16,1.5 M6,0 L6,3 M16,0 L16,3" stroke="#2f8fdd" stroke-width="1.3"/></svg>
<div id="t147" style="position:absolute;white-space:nowrap;line-height:1;font-size:16.23px;top:54.06px;color:#444;font-weight:normal;left:1199.60px;transform-origin:0 0;transform:scaleX(0.9882);">Insert</div>
<div id="t148" style="position:absolute;white-space:nowrap;line-height:1;font-size:16.23px;top:85.76px;color:#444;font-weight:normal;left:1199.60px;transform-origin:0 0;transform:scaleX(0.9746);">Delete</div>
<div id="t149" style="position:absolute;white-space:nowrap;line-height:1;font-size:16.23px;top:116.96px;color:#444;font-weight:normal;left:1199.60px;transform-origin:0 0;transform:scaleX(1.0141);">Format</div>
<svg style="position:absolute;left:1253.2px;top:59.1px;overflow:visible;" width="9" height="5.8" viewBox="0 0 9 5.8"><polyline points="1,1 4.5,4.8 8,1" fill="none" stroke="#444" stroke-width="1.4"/></svg>
<svg style="position:absolute;left:1258.9px;top:90.89999999999999px;overflow:visible;" width="9" height="5.8" viewBox="0 0 9 5.8"><polyline points="1,1 4.5,4.8 8,1" fill="none" stroke="#444" stroke-width="1.4"/></svg>
<svg style="position:absolute;left:1257.1px;top:121.5px;overflow:visible;" width="9" height="5.8" viewBox="0 0 9 5.8"><polyline points="1,1 4.5,4.8 8,1" fill="none" stroke="#444" stroke-width="1.4"/></svg>
<svg style="position:absolute;left:0;top:0;overflow:visible" width="1315" height="180" viewBox="0 0 1315 180"><path d="M707.5,108 L707.5,130.5" stroke="#3a3a3a" stroke-width="1.4"/><path d="M711,111.5 C709.5,110.2 708,109.8 706.5,109.8 C704,109.8 702.3,111.5 702.3,113.8 C702.3,118.5 711.7,118.5 711.7,123.5 C711.7,126 709.5,127.7 706.5,127.7 C704.8,127.7 703.2,127.2 702,126.2" fill="none" stroke="#3a3a3a" stroke-width="1.4"/><ellipse cx="754.3" cy="114" rx="3.9" ry="4.3" fill="none" stroke="#3a3a3a" stroke-width="1.4"/><ellipse cx="765.4" cy="124" rx="3.9" ry="4.3" fill="none" stroke="#3a3a3a" stroke-width="1.4"/><path d="M766.2,109.2 L753.8,129.2" stroke="#3a3a3a" stroke-width="1.4"/><ellipse cx="836.5" cy="112.8" rx="2.4" ry="4.1" fill="none" stroke="#444" stroke-width="1.3"/><ellipse cx="829.8" cy="124.1" rx="2.4" ry="4.1" fill="none" stroke="#444" stroke-width="1.3"/><ellipse cx="836.5" cy="124.1" rx="2.4" ry="4.1" fill="none" stroke="#444" stroke-width="1.3"/><rect x="822.5" y="127.10000000000001" width="1.6" height="1.6" fill="#444"/><path d="M831.3,114.1 L819.2,114.1 M824.1,109.6 L819.2,114.1 L824.1,118.6" fill="none" stroke="#2b88d8" stroke-width="1.7"/><ellipse cx="860.9" cy="112.8" rx="2.4" ry="4.1" fill="none" stroke="#444" stroke-width="1.3"/><ellipse cx="868.2" cy="112.8" rx="2.4" ry="4.1" fill="none" stroke="#444" stroke-width="1.3"/><rect x="854.2" y="116.5" width="1.6" height="1.6" fill="#444"/><ellipse cx="868.2" cy="124.1" rx="2.4" ry="4.1" fill="none" stroke="#444" stroke-width="1.3"/><rect x="860.6" y="127.10000000000001" width="1.6" height="1.6" fill="#444"/><path d="M850.4,124 L861.8,124 M857.2,119.6 L861.8,124 L857.2,128.4" fill="none" stroke="#2b88d8" stroke-width="1.7"/><text x="0" y="0" transform="translate(552.3,80) rotate(-45)" font-size="15" font-family="Liberation Sans" fill="#444">ab</text><path d="M556,83 L571,68.5 M564.8,68.8 L571,68.8 L571,75" fill="none" stroke="#2b88d8" stroke-width="1.6"/><text x="625.3" y="73.6" font-size="14.5" font-family="Liberation Sans" fill="#444">ab</text><text x="625.3" y="84.3" font-size="14.5" font-family="Liberation Sans" fill="#444">c</text><path d="M642.5,74.5 C645.5,77.5 643,81 638.5,80.5 L635,80.5 M638.3,76.6 L634.8,80.5 L638.3,84.4" fill="none" stroke="#2b88d8" stroke-width="1.7"/><rect x="931.3" y="56.8" width="38.5" height="30" fill="#fff"/><path d="M938.3,56.8 V86.8 M955.3,56.8 V86.8 M962.3,56.8 V86.8 M931.3,66.8 H969.8 M931.3,76.8 H969.8" stroke="#3a3a3a" stroke-width="1.3"/><rect x="938.3" y="56.8" width="17" height="10" fill="#f37b7b" stroke="#d13438" stroke-width="1.2"/><rect x="938.3" y="66.8" width="12" height="10" fill="#7ab6ea" stroke="#3a7fc0" stroke-width="1.1"/><rect x="938.3" y="76.8" width="21" height="10" fill="#f37b7b" stroke="#d13438" stroke-width="1.2"/><rect x="931.3" y="56.8" width="38.5" height="30" fill="none" stroke="#3a3a3a" stroke-width="1.6"/><path d="M338,111.8 L332.2,117.5 L338.6,123.4 L345,117" fill="#f6f6f6" stroke="#3a3a3a" stroke-width="1.4" stroke-linejoin="miter"/><path d="M338,111.8 L339.2,109.5 C339.8,108.2 341.3,108.2 341.4,109.8 L341.5,116" fill="none" stroke="#3a3a3a" stroke-width="1.3"/><path d="M344.3,114.6 C345.5,113 347.2,113.2 347.5,115 C347.8,117.5 347.6,119.8 347.3,121.6 C346.5,119.5 345.8,117 344.3,114.6 Z" fill="#1e5fa0"/><rect x="328.1" y="124.2" width="22.7" height="5.5" fill="#f5f500"/><path d="M74.5,129 L83.4,123.6 L91.2,131.4 L83.4,139 Z" fill="#fff" stroke="#e8901a" stroke-width="1.5" stroke-linejoin="round"/><path d="M75,129.5 L89.5,133.5 L83.4,139 Z" fill="#f5b040"/><path d="M82.5,124.5 L85,122 L93,130 L90.5,132.5 Z" fill="#fff" stroke="#3a3a3a" stroke-width="1.5" stroke-linejoin="round"/><path d="M87.5,126.8 L93,121.3 C94,120.3 95.5,121.8 94.5,122.8 L89,128.3" fill="#fff" stroke="#3a3a3a" stroke-width="1.4"/></svg>
</body></html>
